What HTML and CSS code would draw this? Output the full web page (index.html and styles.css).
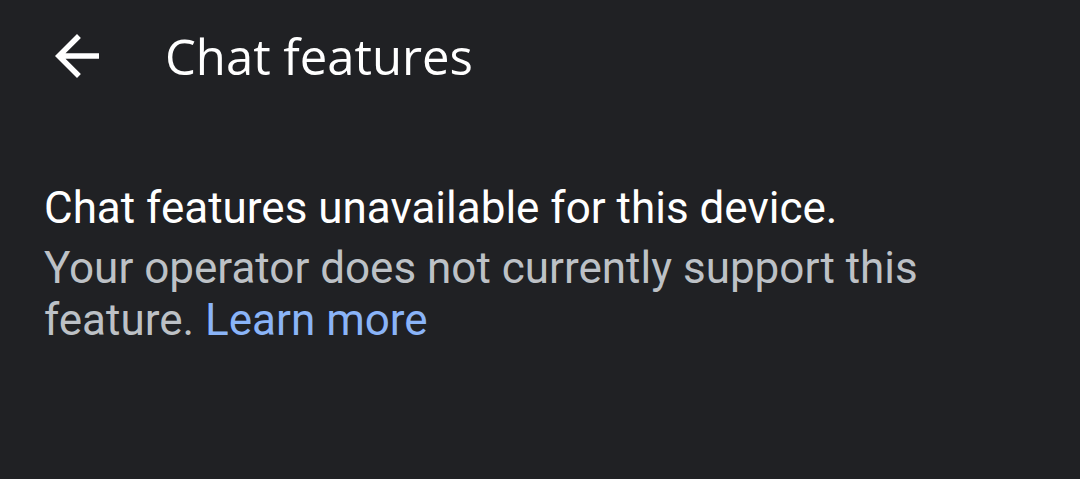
FILE: index.html
```html
<!DOCTYPE html>
<html>
<head>
<meta charset="utf-8">
<link rel="stylesheet" href="styles.css">
</head>
<body>
<div class="app">
  <header class="topbar">
    <div class="back">
      <svg viewBox="0 0 24 24" width="66" height="66"><path d="M20 11H7.83l5.59-5.59L12 4l-8 8 8 8 1.41-1.41L7.83 13H20v-2z" fill="#ffffff"/></svg>
    </div>
    <h1 class="title">Chat features</h1>
  </header>
  <main class="content">
    <p class="primary">Chat features unavailable for this device.</p>
    <p class="secondary">Your operator does not currently support this feature. <a class="link" href="#">Learn more</a></p>
  </main>
</div>
</body>
</html>
```
FILE: styles.css
```css
html, body {
  margin: 0;
  padding: 0;
  background: #202124;
}
.app {
  width: 1080px;
  height: 479px;
  background: #202124;
  overflow: hidden;
}
.topbar {
  display: flex;
  align-items: center;
  height: 112px;
  padding-left: 44px;
}
.back {
  width: 66px;
  height: 66px;
  display: flex;
}
.title {
  margin: 0 0 0 55px;
  font-family: "Open Sans", sans-serif;
  font-weight: 400;
  font-size: 49px;
  line-height: 60px;
  color: #ffffff;
}
.content {
  padding: 70px 44px 0 44px;
  font-family: Roboto, sans-serif;
  font-size: 44px;
}
.primary {
  margin: 0;
  color: #ffffff;
  line-height: 52px;
}
.secondary {
  margin: 8px 0 0 0;
  color: #bdc1c6;
  line-height: 52px;
  width: 900px;
}
.link {
  color: #8ab4f8;
  text-decoration: none;
}
```
